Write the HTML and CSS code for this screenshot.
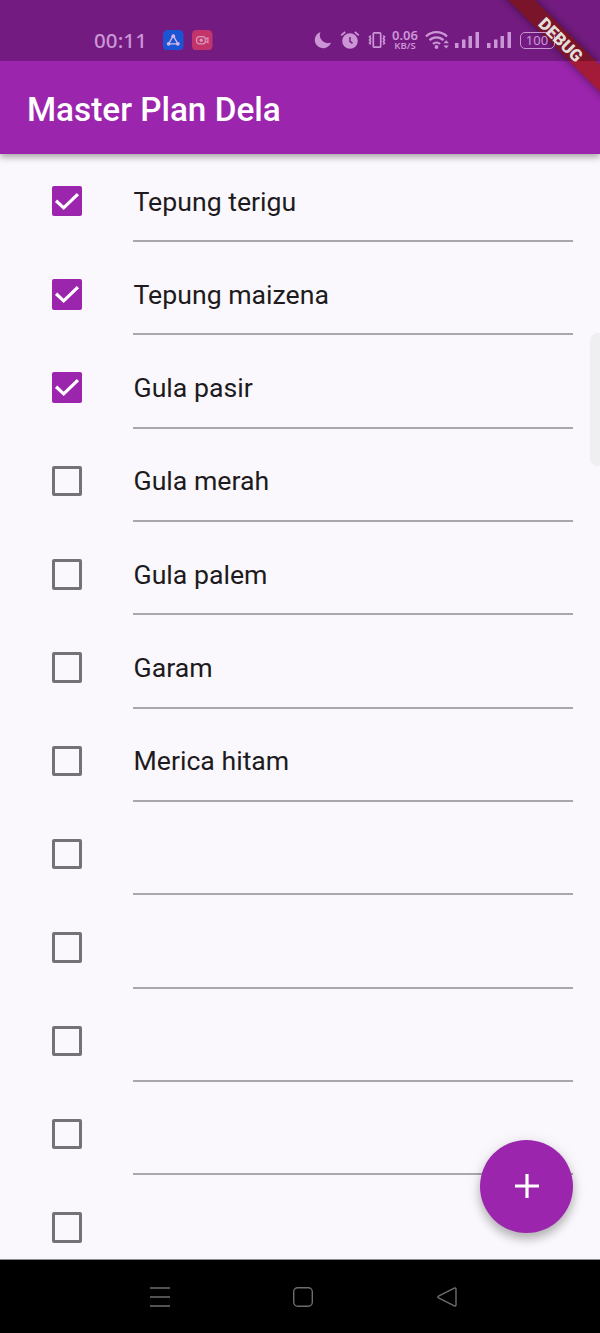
FILE: index.html
```html
<!DOCTYPE html>
<html lang="id">
<head>
<meta charset="utf-8">
<title>Master Plan Dela</title>
<link rel="stylesheet" href="styles.css">
</head>
<body>
<div class="screen">
  <header class="top">
    <div class="status">
      <span class="time">00:11</span>
      <svg class="app-icon" viewBox="0 0 20 20"><rect width="20" height="20" rx="4.5" fill="#1b55d4"/><path d="M10 5.5 5.5 13.5h9z" fill="none" stroke="#d6b5e6" stroke-width="1.3"/><circle cx="10" cy="6" r="1.8" fill="#d6b5e6"/><circle cx="5.5" cy="13.5" r="1.8" fill="#d6b5e6"/><circle cx="14.5" cy="13.5" r="1.8" fill="#d6b5e6"/></svg>
      <svg class="app-icon app-icon-red" viewBox="0 0 20 20"><rect width="20" height="20" rx="4.5" fill="#c3356a"/><g fill="none" stroke="#d996bd" stroke-width="1.2"><rect x="4.500" y="6.500" width="8.500" height="7" rx="2.500"/><path d="m13 9 2.500-1.300v4.600L13 11"/></g><circle cx="9" cy="10" r="1.6" fill="#d996bd"/></svg>
      <svg class="moon" viewBox="0 0 18 18"><path d="M6.500 1A8.300 8.300 0 1 0 17 11.500 8 8 0 0 1 6.500 1z" fill="currentColor"/></svg>
      <svg class="alarm" viewBox="0 0 20 20"><circle cx="10" cy="11" r="7.8" fill="currentColor"/><path d="M1.2 5.3 5.2 2M18.8 5.3 14.8 2" stroke="currentColor" stroke-width="1.7"/><path d="M10 7v4.3l2.5 2" fill="none" stroke="#751b82" stroke-width="1.5"/></svg>
      <svg class="vibrate" viewBox="0 0 18 18"><g fill="none" stroke="currentColor"><rect x="5.300" y="1.800" width="7.400" height="14.400" rx="1" stroke-width="1.700"/><path d="m2.700 4.500-1.200 1.500 1.200 1.500-1.200 1.500 1.200 1.500-1.200 1.500 1.200 1.500M15.300 4.500l1.200 1.500-1.200 1.500 1.200 1.500-1.200 1.500 1.200 1.500-1.200 1.500" stroke-width="1.600"/></g></svg>
      <span class="speed"><span class="rate">0.06</span><span class="unit">KB/S</span></span>
      <svg class="wifi" viewBox="0 0 26 22"><g fill="none" stroke="currentColor" stroke-width="2.300"><path d="M1 7.500a15 15 0 0 1 21 0M4.500 11.200a10 10 0 0 1 14 0M8 15a5 5 0 0 1 7 0"/></g><circle cx="11.500" cy="18" r="1.900" fill="currentColor"/><path d="m18.500 14.300 2.700-3 2.700 3zM18.500 16.500l2.700 3 2.700-3z" fill="currentColor"/></svg>
      <svg class="signal" viewBox="0 0 24 18"><path d="M0 12h3.500v5H0zM7 8.500h3.500V17H7zM13.500 5H17v12h-3.500zM20.500 1H24v16h-3.500z" fill="currentColor"/></svg>
      <svg class="signal second" viewBox="0 0 24 18"><path d="M0 12h3.500v5H0zM7 8.500h3.500V17H7zM13.500 5H17v12h-3.500zM20.500 1H24v16h-3.500z" fill="currentColor"/></svg>
      <span class="battery">100</span>
    </div>
    <h1 class="title">Master Plan Dela</h1>
    <div class="banner-clip"><div class="banner band"></div></div>
    <div class="banner-clip banner-front"><div class="banner">DEBUG</div></div>
  </header>
  <main class="list">
    <div class="row"><span class="box checked"><svg viewBox="0 0 30 30"><path d="m4 14.500 7.500 7L25.500 8" fill="none" stroke="#fff" stroke-width="3.200"/></svg></span><span class="field">Tepung terigu</span></div>
    <div class="row"><span class="box checked"><svg viewBox="0 0 30 30"><path d="m4 14.500 7.500 7L25.500 8" fill="none" stroke="#fff" stroke-width="3.200"/></svg></span><span class="field">Tepung maizena</span></div>
    <div class="row"><span class="box checked"><svg viewBox="0 0 30 30"><path d="m4 14.500 7.500 7L25.500 8" fill="none" stroke="#fff" stroke-width="3.200"/></svg></span><span class="field">Gula pasir</span></div>
    <div class="row"><span class="box"></span><span class="field">Gula merah</span></div>
    <div class="row"><span class="box"></span><span class="field">Gula palem</span></div>
    <div class="row"><span class="box"></span><span class="field">Garam</span></div>
    <div class="row"><span class="box"></span><span class="field">Merica hitam</span></div>
    <div class="row"><span class="box"></span><span class="field"></span></div>
    <div class="row"><span class="box"></span><span class="field"></span></div>
    <div class="row"><span class="box"></span><span class="field"></span></div>
    <div class="row"><span class="box"></span><span class="field"></span></div>
    <div class="row"><span class="box"></span><span class="field"></span></div>
  </main>
  <nav class="nav">
    <svg viewBox="0 0 22 22"><path d="M1 2h20M1 11h20M1 20h20"/></svg>
    <svg viewBox="0 0 22 22"><rect x="1.700" y="1.700" width="18.600" height="18.600" rx="4"/></svg>
    <svg viewBox="0 0 22 22"><path d="M18.300 2.200 2.500 10.200q-1.300.8 0 1.600l15.800 8q1.700.6 1.700-1V3.200q0-1.600-1.700-1z"/></svg>
  </nav>
  <div class="edge-handle"></div>
  <div class="fab"><svg viewBox="0 0 24 24"><path d="M12 0v24M0 12h24" stroke="#fff" stroke-width="3.200"/></svg></div>
</div>
</body>
</html>
```
FILE: styles.css
```css
* { box-sizing: border-box; }
body { margin: 0; font-family: Roboto, sans-serif; }
svg { display: block; flex: none; }
.screen {
  position: relative;
  display: flex;
  flex-direction: column;
  width: 600px;
  height: 1333px;
  overflow: hidden;
  background: #faf8fc;
}
.top {
  position: relative;
  z-index: 1;
  flex: none;
  height: 154px;
  background: #9b25ad;
  box-shadow: 0 3px 7px rgba(0, 0, 0, .35);
}
.status {
  position: relative;
  z-index: 2;
  display: flex;
  align-items: center;
  height: 61px;
  padding: 19px 0 0 94px;
  background: rgba(0, 0, 0, .25);
  color: #cb96d6;
}
.time { width: 69px; font: 500 20.500px/22px "Noto Sans", sans-serif; letter-spacing: .1px; }
.app-icon { width: 20.500px; height: 20.500px; }
.app-icon-red { margin-left: 8.500px; }
.moon { width: 18px; height: 18px; margin-left: 101px; }
.alarm { width: 20px; height: 20px; margin-left: 8px; }
.vibrate { width: 18px; height: 18px; margin-left: 8px; }
.speed {
  display: flex;
  flex-direction: column;
  align-items: center;
  width: 29px;
  margin-left: 5px;
  font-family: "Noto Sans", sans-serif;
  font-weight: 600;
}
.rate { font-size: 13px; line-height: 11px; }
.unit { font-size: 9.500px; line-height: 10px; }
.wifi { width: 26px; height: 22px; margin-left: 5px; }
.signal { width: 24px; height: 18px; margin-left: 4px; }
.second { margin-left: 8px; }
.battery {
  width: 35px;
  height: 17px;
  margin-left: 9px;
  border: 1.500px solid;
  border-radius: 5px;
  font: 13px/14px "Noto Sans", sans-serif;
  text-align: center;
}
.title {
  margin: 0;
  padding: 2px 27px 0;
  color: #fff;
  font-size: 33.300px;
  font-weight: 500;
  line-height: 93px;
}
.banner-clip {
  position: absolute;
  top: 0;
  right: 0;
  width: 110px;
  height: 110px;
  overflow: hidden;
}
.banner-front { z-index: 3; }
.banner {
  position: absolute;
  top: 29.500px;
  left: -29.500px;
  width: 200px;
  height: 19px;
  transform: rotate(45deg);
  color: #e2dfda;
  font-size: 17px;
  font-weight: 900;
  line-height: 20px;
  text-align: center;
}
.band {
  background: #a31b39;
  box-shadow: 0 0 10px rgba(0, 0, 0, .45);
}
.list { flex: 1; min-height: 0; overflow: hidden; }
.row {
  display: flex;
  align-items: flex-start;
  height: 93.330px;
  padding: 0 27px 0 51.500px;
}
.box {
  flex: none;
  width: 30.500px;
  height: 30.500px;
  margin-top: 31.700px;
  border: 3.300px solid #747276;
  border-radius: 2px;
}
.checked { border: 0; background: #9b25ad; }
.field {
  flex: 1;
  height: 88px;
  margin-left: 51px;
  padding: 1.500px 0 0 .5px;
  border-bottom: 2px solid #a9a7ab;
  color: #1d1b20;
  font-size: 26.670px;
  line-height: 93px;
}
.nav {
  display: flex;
  flex: none;
  align-items: center;
  justify-content: center;
  gap: 121.500px;
  height: 74px;
  padding-left: 6px;
  border-top: 1px solid #8c8b8d;
  background: #000;
}
.nav svg {
  width: 22px;
  height: 22px;
  fill: none;
  stroke: #6d6d6d;
  stroke-width: 1.400;
}
.edge-handle {
  position: absolute;
  top: 333px;
  right: 0;
  width: 10px;
  height: 133px;
  border-radius: 8px 0 0 8px;
  background: #efeef0;
}
.fab {
  position: absolute;
  top: 1139.500px;
  left: 480px;
  display: grid;
  place-items: center;
  width: 93.300px;
  height: 93.300px;
  border-radius: 50%;
  background: #9b25ad;
  box-shadow: 0 6px 10px rgba(0, 0, 0, .24), 0 2px 16px rgba(0, 0, 0, .1);
}
.fab svg { width: 24px; height: 24px; }
```
